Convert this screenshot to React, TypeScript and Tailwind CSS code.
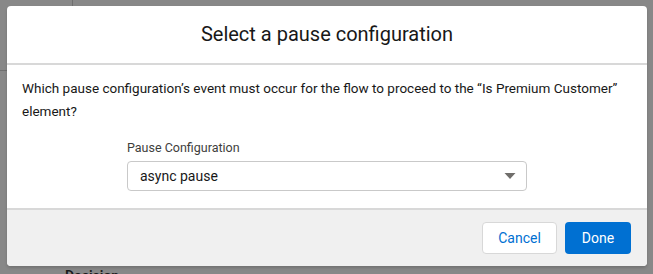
export default function App() {
    return (
        <div className="relative h-[274px] w-[653px] overflow-hidden bg-[#888888] font-['Roboto',sans-serif]">
            {/* canvas bits behind the backdrop */}
            <div className="absolute left-[72px] top-0 h-[6px] w-px bg-[#6f6f6f]" />
            <div className="absolute left-0 top-[70px] h-px w-[7px] bg-[#6f6f6f]" />
            <div className="absolute left-[65px] top-[266px] text-[14px] font-semibold text-[#1a1a1a]">Decision</div>

            <div className="relative ml-[7px] mt-[6px] w-[640px] rounded-[4px] bg-white shadow-[0_2px_3px_rgba(0,0,0,0.16)]">
                <div className="flex h-[59px] items-center justify-center border-b-2 border-[#d8d8d8] pb-[2px]">
                    <h2 className="text-[20px] font-normal text-[#181818]">Select a pause configuration</h2>
                </div>

                <div className="h-[143px] px-[15px] pt-[12px]">
                    <p className="text-[13.5px] leading-[23px] text-[#181818]">
                        Which pause configuration’s event must occur for the flow to proceed to the “Is Premium Customer” element?
                    </p>
                    <div className="ml-[105px] mt-[16px] w-[400px]">
                        <label className="block text-[12.5px] leading-[18px] text-[#3e3e3c]">Pause Configuration</label>
                        <div className="mt-[4px] flex h-[30px] items-center justify-between rounded-[4px] border border-[#c9c9c9] bg-white pl-[12px] pr-[10px]">
                            <span className="text-[14px] text-[#181818]">async pause</span>
                            <svg width="12" height="8" viewBox="0 0 12 8">
                                <path d="M0.5 1 L11.5 1 L6 7 Z" fill="#706e6b" />
                            </svg>
                        </div>
                    </div>
                </div>

                <div className="flex h-[58px] items-center justify-end gap-[8px] rounded-b-[4px] border-t-2 border-[#d8d8d8] bg-[#f0f0f0] pr-[16px]">
                    <button className="h-[32px] w-[75px] rounded-[4px] border border-[#d8d8d8] bg-white text-[14px] text-[#0070d2]">Cancel</button>
                    <button className="h-[32px] w-[66px] rounded-[4px] bg-[#0070d2] text-[14px] text-white">Done</button>
                </div>
            </div>
        </div>
    )
}
